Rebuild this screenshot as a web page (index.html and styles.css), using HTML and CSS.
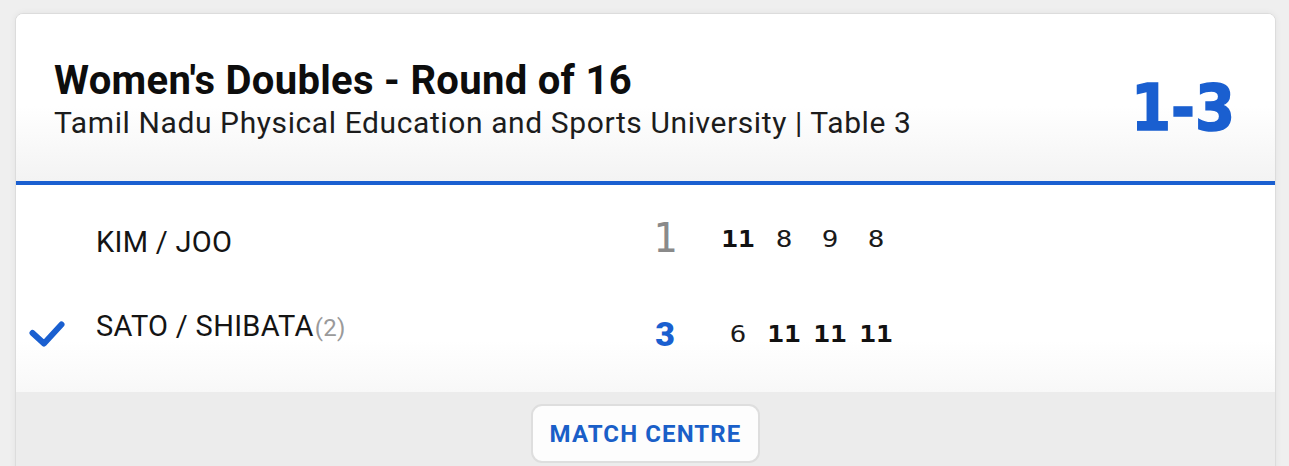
FILE: index.html
```html
<!DOCTYPE html>
<html lang="en">
<head>
<meta charset="utf-8">
<title>Match</title>
<link rel="stylesheet" href="styles.css">
</head>
<body>
<div class="card">
  <header class="head">
    <div class="head-text">
      <h1 class="title">Women's Doubles - Round of 16</h1>
      <p class="venue">Tamil Nadu Physical Education and Sports University | Table 3</p>
    </div>
    <div class="total">1-3</div>
  </header>
  <section class="rows">
    <div class="row">
      <div class="mark"></div>
      <div class="name name-low">KIM / JOO</div>
      <div class="sets sets-lose">1</div>
      <div class="games">
        <span class="g win">11</span><span class="g">8</span><span class="g">9</span><span class="g">8</span>
      </div>
    </div>
    <div class="row">
      <div class="mark">
        <svg width="36" height="26" viewBox="0 0 36 26"><polyline points="3.5,12 15,22.5 32.5,3.5" fill="none" stroke="#1a5fd0" stroke-width="6" stroke-linecap="round" stroke-linejoin="round"/></svg>
      </div>
      <div class="name name-high">SATO / SHIBATA<span class="seed">(2)</span></div>
      <div class="sets sets-win">3</div>
      <div class="games">
        <span class="g">6</span><span class="g win">11</span><span class="g win">11</span><span class="g win">11</span>
      </div>
    </div>
  </section>
  <footer class="foot">
    <button class="btn">MATCH CENTRE</button>
  </footer>
</div>
</body>
</html>
```

FILE: styles.css
```css
html, body {
  margin: 0;
  padding: 0;
  background: #efefef;
  font-family: Roboto, "Liberation Sans", sans-serif;
  color: #111;
  overflow: hidden;
}

.card {
  margin: 13px 0 0 15px;
  width: 1259px;
  border: 1px solid #dcdcdc;
  border-radius: 8px;
  background: #fff;
  box-shadow: 0 0 6px rgba(0,0,0,0.06);
  overflow: hidden;
}

.head {
  height: 171px;
  box-sizing: border-box;
  border-bottom: 4px solid #1a5fd0;
  background: linear-gradient(to bottom, #ffffff 0%, #ffffff 55%, #f3f3f3 100%);
  display: flex;
  align-items: flex-start;
  justify-content: space-between;
  padding: 45px 40px 0 38px;
}

.title {
  margin: 0;
  font-size: 40px;
  font-weight: 700;
  line-height: 44px;
  letter-spacing: 0.3px;
  color: #0d0d0d;
}

.venue {
  margin: 2px 0 0;
  font-size: 30px;
  font-weight: 400;
  line-height: 36px;
  color: #1c1c1c;
  letter-spacing: 0.6px;
}

.total {
  margin-top: 11px;
  font-family: "DejaVu Sans Condensed", "DejaVu Sans", sans-serif;
  font-stretch: condensed;
  font-size: 64px;
  font-weight: 700;
  line-height: 76px;
  color: #1a5fd0;
  letter-spacing: 0;
  -webkit-text-stroke: 1.5px #1a5fd0;
}

.rows {
  padding: 6px 0 11px 13px;
  background: linear-gradient(to bottom, #fff 75%, #f8f8f8 100%);
}

.row {
  height: 95px;
  display: flex;
  align-items: center;
}

.mark {
  width: 67px;
  display: flex;
  align-items: center;
}

.name {
  width: 548px;
  font-size: 29px;
  line-height: 34px;
  letter-spacing: 0.3px;
  color: #141414;
}

.name-low {
  margin-top: 6px;
}

.name-high {
  margin-bottom: 14px;
}

.seed {
  color: #9a9a9a;
  font-size: 24px;
  margin-left: 1px;
}

.sets {
  width: 42px;
  text-align: center;
}

.sets-lose {
  font-family: "DejaVu Sans Mono", monospace;
  font-size: 40px;
  line-height: 48px;
  color: #8a8a8a;
  margin-top: -2px;
}

.sets-win {
  font-family: Roboto, sans-serif;
  font-weight: 900;
  font-size: 34px;
  line-height: 40px;
  color: #1a5fd0;
}

.games {
  margin-left: 29px;
  display: flex;
}

.g {
  display: inline-block;
  width: 46px;
  text-align: center;
  font-family: "DejaVu Sans Mono", monospace;
  font-size: 23px;
  line-height: 28px;
  color: #1a1a1a;
  transform: scaleX(1.2);
}

.g.win {
  font-weight: 700;
  color: #111;
}

.foot {
  background: #ececec;
  padding: 12px 0 20px;
  display: flex;
  justify-content: center;
}

.btn {
  width: 229px;
  height: 59px;
  border: 2px solid #dedede;
  border-radius: 11px;
  background: #fdfdfd;
  font-family: Roboto, sans-serif;
  font-weight: 700;
  font-size: 24px;
  color: #1a5fc8;
  letter-spacing: 1.1px;
  cursor: pointer;
}
```
